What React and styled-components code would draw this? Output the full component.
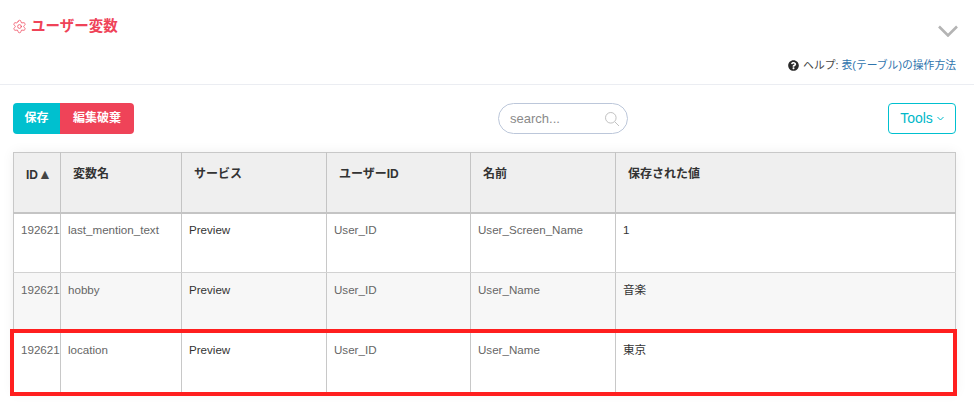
import React from "react";
import styled, { createGlobalStyle } from "styled-components";
import { FaQuestionCircle } from "react-icons/fa";
import { Settings } from "lucide-react";

const Global = createGlobalStyle`
  html, body { margin: 0; padding: 0; background: #fff; }
  body { font-family: "Liberation Sans", "Noto Sans CJK JP", sans-serif; overflow: hidden; }
`;
const Page = styled.div`width: 974px; height: 407px; position: relative; overflow: hidden;`;
const Header = styled.header`
  height: 84px; border-bottom: 1px solid #ebedf2; padding: 0 18px 0 12px;
  display: flex; justify-content: space-between;
`;
const Title = styled.h1`
  margin: 17px 0 0; height: 18px; display: flex; align-items: center; gap: 4px;
  font-size: 14.5px; line-height: 18px; font-weight: 700; color: #ef4358;
`;
const HeaderRight = styled.div`display: flex; flex-direction: column; align-items: flex-end;`;
const Collapse = styled.svg`margin-top: 25px; width: 20px; height: 12px; display: block; margin-right: -2px;`;
const Help = styled.div`
  margin-top: 21px; display: flex; align-items: center; gap: 4px;
  font-size: 10.8px; line-height: 14px; color: #444; white-space: nowrap;
`;
const HelpLink = styled.a`color: #2f74ad; text-decoration: none;`;
const Toolbar = styled.div`
  display: grid; grid-template-columns: 485px 130px 1fr; align-items: center;
  padding: 18px 18px 0 13px; height: 31px;
`;
const Group = styled.div`display: flex;`;
const ActionButton = styled.button`
  height: 31px; padding: 0; border: 0; color: #fff; font: 700 12px/31px "Liberation Sans", "Noto Sans CJK JP", sans-serif;
  background: ${p => p.$danger ? "#ef4358" : "#00c0cf"};
  border-radius: ${p => p.$danger ? "0 4px 4px 0" : "4px 0 0 4px"};
  width: ${p => p.$danger ? "74px" : "47px"};
  white-space: nowrap;
`;
const Search = styled.div`
  box-sizing: border-box; width: 130px; height: 31px; border: 1px solid #bcc7da; border-radius: 16px;
  display: flex; align-items: center; justify-content: space-between; padding: 0 7px 0 11px;
  font-size: 13px; color: #8a8a8a;
`;
const ToolsWrap = styled.div`display: flex; justify-content: flex-end;`;
const ToolsButton = styled.button`
  width: 68px; height: 31px; border: 1px solid #00c0cf; border-radius: 4px; background: #fff; padding: 0;
  color: #00b8c8; font: 14px/29px "Liberation Sans", sans-serif; display: flex; align-items: center; justify-content: center; gap: 4px;
`;
const TableCard = styled.div`margin: 18px 0 0 13px; width: 943px; box-shadow: 0 0 12px rgba(0,0,0,.06);`;
const Table = styled.table`
  width: 943px; table-layout: fixed; border-collapse: collapse;
  border-top: 1px solid #c8c8c8; border-left: 1px solid #c8c8c8; border-right: 1px solid #c8c8c8;
`;
const Th = styled.th`
  height: 60px; vertical-align: top; text-align: left; padding: 13px 12px 0; box-sizing: border-box;
  background: #efefef; border-right: 1px solid #c4c4c4; border-bottom: 2px solid #c4c4c4;
  font-size: 12px; line-height: 16px; font-weight: 700; color: #333; white-space: nowrap;
  &:last-child { border-right: 0; }
`;
const SortMark = styled.span`font-size: 14px; font-weight: 400; color: #444;`;
const Row = styled.tr`
  background: ${p => p.$alt ? "#f7f7f7" : "#fff"};
  &:first-child td { padding-top: 9px; }
`;
const Td = styled.td`
  height: 60px; vertical-align: top; padding: 10px 7px 0; box-sizing: border-box; overflow: hidden; white-space: nowrap;
  border-right: 1px solid #c8c8c8; border-bottom: 1px solid #d2d2d2;
  font-size: 11.6px; line-height: 14px; color: ${p => p.$dark ? "#333" : "#666"};
  &:last-child { border-right: 0; }
`;
const Highlight = styled.div`
  position: absolute; left: 10px; top: 329px; width: 947px; height: 67px; box-sizing: border-box;
  border: 4px solid #ff1f1f;
`;

const columns = [47, 121, 145, 144, 145, 340];
const headers = ["ID", "変数名", "サービス", "ユーザーID", "名前", "保存された値"];
const rows = [
  ["192621", "last_mention_text", "Preview", "User_ID", "User_Screen_Name", "1"],
  ["192621", "hobby", "Preview", "User_ID", "User_Name", "音楽"],
  ["192621", "location", "Preview", "User_ID", "User_Name", "東京"],
];

export default function App() {
  return (
    <Page>
      <Global />
      <Header>
        <Title><Settings size={15} strokeWidth={1.2} />ユーザー変数</Title>
        <HeaderRight>
          <Collapse viewBox="0 0 20 12"><path d="M1 1.500 10 10.500 19 1.500" fill="none" stroke="#b4b4b4" strokeWidth="2.600" /></Collapse>
          <Help>
            <FaQuestionCircle size={11} color="#2b2b2b" />
            <span>ヘルプ: <HelpLink>表(テーブル)の操作方法</HelpLink></span>
          </Help>
        </HeaderRight>
      </Header>
      <Toolbar>
        <Group>
          <ActionButton>保存</ActionButton>
          <ActionButton $danger>編集破棄</ActionButton>
        </Group>
        <Search>
          <span>search...</span>
          <svg width="16" height="16" viewBox="0 0 16 16" fill="none" stroke="#c2c2c2" strokeWidth="1">
            <circle cx="6.800" cy="6.800" r="5.300" /><path d="M10.800 10.800 15 15" />
          </svg>
        </Search>
        <ToolsWrap>
          <ToolsButton>Tools
            <svg width="7" height="5" viewBox="0 0 7 5" fill="none" stroke="#00b8c8" strokeWidth="1"><path d="M.5 1 3.500 4 6.500 1" /></svg>
          </ToolsButton>
        </ToolsWrap>
      </Toolbar>
      <TableCard>
        <Table>
          <colgroup>{columns.map((w, i) => <col key={i} style={{ width: w }} />)}</colgroup>
          <thead><tr>{headers.map((h, i) => <Th key={h}>{h}{i === 0 && <SortMark>▲</SortMark>}</Th>)}</tr></thead>
          <tbody>
            {rows.map((r, i) => (
              <Row key={i} $alt={i === 1}>
                {r.map((c, j) => <Td key={j} $dark={j === 2 || j === 5}>{c}</Td>)}
              </Row>
            ))}
          </tbody>
        </Table>
      </TableCard>
      <Highlight />
    </Page>
  );
}
